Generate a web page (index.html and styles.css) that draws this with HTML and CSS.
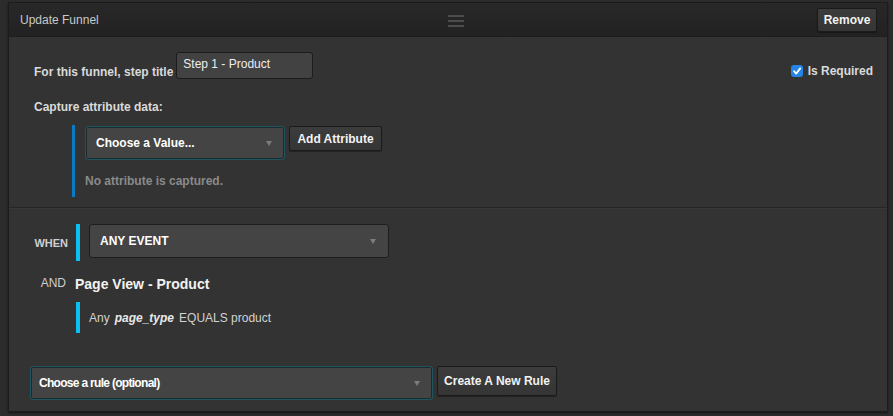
FILE: index.html
```html
<!DOCTYPE html>
<html>
<head>
<meta charset="utf-8">
<link rel="stylesheet" href="styles.css">
</head>
<body>
<div class="panel">
  <div class="panel-head">
    <span class="head-title">Update Funnel</span>
    <span class="grip"><i></i><i></i><i></i></span>
    <button class="btn btn-remove">Remove</button>
  </div>

  <div class="sec-top">
    <div class="row-title">
      <label class="lbl">For this funnel, step title</label>
      <input class="txt" type="text" value="Step 1 - Product">
      <div class="req">
        <span class="chk"><svg viewBox="0 0 12 12" width="12" height="12"><path d="M3 6.2 L5.2 8.6 L9.2 3.4" fill="none" stroke="#fff" stroke-width="1.8" stroke-linecap="round" stroke-linejoin="round"/></svg></span>
        <span class="lbl">Is Required</span>
      </div>
    </div>
    <div class="lbl cap-lbl">Capture attribute data:</div>
    <div class="attr-block">
      <div class="attr-row">
        <div class="sel sel-focus sel-value"><span>Choose a Value...</span><span class="arrow"></span></div>
        <button class="btn btn-add">Add Attribute</button>
      </div>
      <div class="none-txt">No attribute is captured.</div>
    </div>
  </div>

  <div class="sec-when">
    <div class="when-grid">
      <div class="side-lbl when-lbl">WHEN</div>
      <div class="bar bar-when">
        <div class="sel sel-event"><span>ANY EVENT</span><span class="arrow"></span></div>
      </div>
      <div class="side-lbl and-lbl">AND</div>
      <div class="and-title">Page View - Product</div>
      <div></div>
      <div class="bar bar-cond">Any <b><i>page_type</i></b> EQUALS product</div>
    </div>
  </div>

  <div class="sec-rule">
    <div class="sel sel-focus sel-rule"><span>Choose a rule (optional)</span><span class="arrow"></span></div>
    <button class="btn btn-create">Create A New Rule</button>
  </div>
</div>
</body>
</html>
```

FILE: styles.css
```css
* { box-sizing: border-box; }
html, body { margin: 0; padding: 0; }
body {
  background: #2c2c2c;
  font-family: "Liberation Sans", Arial, Helvetica, sans-serif;
  font-size: 12px;
  color: #d6d6d6;
  width: 893px;
  height: 416px;
  overflow: hidden;
}
.panel {
  margin: 2px 0 0 8px;
  width: 880px;
  background: #333333;
  border: 1px solid #1b1b1b;
  box-shadow: 0 1px 2px rgba(0,0,0,0.5);
}
.panel-head {
  height: 34px;
  background: linear-gradient(#282828, #222222);
  border-bottom: 1px solid #1e1e1e;
  display: flex;
  align-items: center;
  padding: 0 10px 0 11px;
  position: relative;
}
.head-title { color: #c9c9c9; font-size: 12px; flex: 1; }
.grip {
  position: absolute;
  left: 439px;
  top: 12px;
  width: 16px;
  display: flex;
  flex-direction: column;
  gap: 3px;
}
.grip i { display: block; height: 2px; background: #4c4c4c; }
.btn {
  font-family: "Liberation Sans", Arial, sans-serif;
  font-weight: bold;
  font-size: 12px;
  color: #f2f2f2;
  background: linear-gradient(#3c3c3c, #353535);
  border: 1px solid #1a1a1a;
  border-radius: 2px;
  box-shadow: 0 1px 1px rgba(0,0,0,0.35);
  padding: 0;
  cursor: pointer;
}
.btn-remove { width: 60px; height: 24px; font-size: 12px; margin-top: 1px; }

.lbl { font-weight: bold; color: #dadada; font-size: 12px; line-height: 14px; }

.sec-top { padding: 15px 0 10px 25px; }
.row-title { display: flex; align-items: flex-end; height: 27px; }
.row-title > .lbl { margin-right: 3px; }
.txt {
  width: 137px;
  height: 27px;
  background: #424242;
  border: 1px solid #1c1c1c;
  border-radius: 3px;
  color: #eee;
  font-family: "Liberation Sans", Arial, sans-serif;
  font-size: 12px;
  padding: 0 0 4px 6px;
}
.req { margin-left: auto; margin-right: 14px; display: flex; align-items: center; gap: 5px; margin-bottom: 1px; }
.chk {
  width: 12px; height: 12px;
  background: #2585e6;
  border-radius: 3px;
  display: flex;
}
.cap-lbl { margin-top: 21px; }
.attr-block {
  margin: 11px 0 0 38px;
  border-left: 3px solid #0a7bc2;
  padding: 1px 0 9px 10px;
}
.attr-row { display: flex; align-items: flex-start; gap: 4px; }
.sel {
  display: flex;
  align-items: center;
  justify-content: space-between;
  height: 34px;
  background: #444444;
  border: 1px solid #1e1e1e;
  border-radius: 3px;
  color: #ffffff;
  font-weight: bold;
  font-size: 12px;
  padding: 0 12px 0 10px;
}
.sel-focus { border-color: #1f5560; box-shadow: 0 0 0 1px #1a2a2d inset; }
.arrow {
  width: 0; height: 0;
  border-left: 3.5px solid transparent;
  border-right: 3.5px solid transparent;
  border-top: 5px solid #7c7c7c;
}
.sel-value { width: 200px; }
.btn-add { width: 93px; height: 25px; }
.none-txt { margin-top: 14px; color: #8a8a8a; font-weight: bold; line-height: 14px; }

.sec-when {
  border-top: 1px solid #262626;
  box-shadow: inset 0 1px 0 #393939;
  padding: 16px 0 0 25px;
}
.when-grid {
  display: grid;
  grid-template-columns: 34px auto;
  column-gap: 8px;
  justify-items: start;
}
.side-lbl { justify-self: end; align-self: center; color: #cfcfcf; }
.when-lbl { font-weight: bold; font-size: 11px; padding-top: 1px; }
.bar { border-left: 4px solid #0cbff2; }
.bar-when { padding: 0 0 3px 9px; }
.sel-event { width: 300px; padding-left: 10px; }
.and-lbl { font-size: 12px; margin-top: 15px; align-self: start; margin-right: 2px; }
.and-title { font-weight: bold; font-size: 14px; color: #f2f2f2; margin: 15px 0 0 -1px; line-height: 16px; }
.bar-cond { margin-top: 10px; height: 31px; display: flex; align-items: center; padding-left: 9px; color: #d2d2d2; gap: 5px; }
.bar-cond b { color: #e8e8e8; }

.sec-rule { display: flex; align-items: flex-start; gap: 4px; padding: 33px 0 11px 21px; }
.sel-rule { width: 403px; padding-left: 8px; font-size: 12px; letter-spacing: -0.7px; }
.btn-create { width: 120px; height: 30px; font-size: 12px; }
```
